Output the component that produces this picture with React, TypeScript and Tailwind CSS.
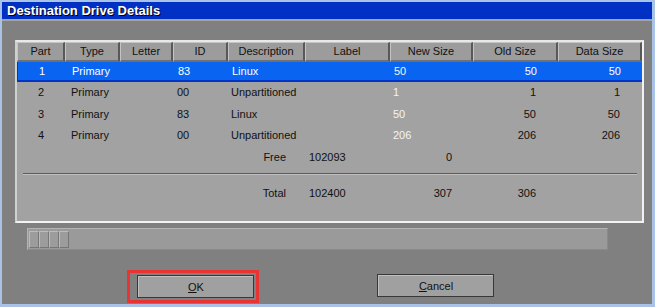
import React from "react";

const cols = "grid grid-cols-[48px_55px_53px_55px_77px_85px_83px_85px_84px]";

const headers = ["Part", "Type", "Letter", "ID", "Description", "Label", "New Size", "Old Size", "Data Size"];

const rows = [
  { part: "1", type: "Primary", id: "83", desc: "Linux", newSize: "50", oldSize: "50", dataSize: "50" },
  { part: "2", type: "Primary", id: "00", desc: "Unpartitioned", newSize: "1", oldSize: "1", dataSize: "1" },
  { part: "3", type: "Primary", id: "83", desc: "Linux", newSize: "50", oldSize: "50", dataSize: "50" },
  { part: "4", type: "Primary", id: "00", desc: "Unpartitioned", newSize: "206", oldSize: "206", dataSize: "206" },
];

function Row({ r, selected }: { r: (typeof rows)[number]; selected?: boolean }) {
  const text = selected ? "text-white" : "text-[#111]";
  return (
    <div
      className={`${cols} h-[21.5px] items-center ${text} ${
        selected ? "bg-[#0a64f2] border-y-2 border-l border-[#0034c4]" : ""
      }`}
    >
      <span className="text-center">{r.part}</span>
      <span className="pl-[6px]">{r.type}</span>
      <span />
      <span className="pl-[4px]">{r.id}</span>
      <span className="pl-[3px]">{r.desc}</span>
      <span />
      <span className="pl-[3px] text-[#f4f4f4]">{r.newSize}</span>
      <span className="pr-[22px] text-right">{r.oldSize}</span>
      <span className="pr-[22px] text-right">{r.dataSize}</span>
    </div>
  );
}

function Button({ children }: { children: React.ReactNode }) {
  return (
    <button className="w-[117px] h-[23px] border border-[#383838] bg-[#a0a0a0] text-[11px] text-[#111]">
      <span className="flex h-full w-full items-center justify-center border-t border-l border-[#c0c0c0]">
        {children}
      </span>
    </button>
  );
}

export default function App() {
  return (
    <div
      className="w-[655px] h-[307px] bg-[#a9c3e6] pt-[2px] pl-[2px] pr-[3px] pb-[3px]"
      style={{ fontFamily: '"Liberation Sans", Arial, sans-serif' }}
    >
      <div className="flex h-full flex-col bg-[#808080]">
        <div className="h-[19px] flex items-center pl-[5px] bg-[#0030c4] border-b-2 border-[#a4a4a4]">
          <span className="text-[13px] font-bold text-white leading-none [text-shadow:1px_1px_0_#000]">
            Destination Drive Details
          </span>
        </div>

        <div className="pt-[19px] pl-[13px] text-[11px]">
          {/* partition table panel */}
          <div className="w-[629px] h-[183px] border-2 border-t-[#e8e8e8] border-l-[#d0d0d0] border-r-[#f2f2f2] border-b-[#f2f2f2] bg-[#a2a2a2]">
            <div className={`${cols} h-[18px]`}>
              {headers.map((h) => (
                <div
                  key={h}
                  className="flex items-center justify-center bg-[#9c9c9c] border-t border-l border-[#c4c4c4] border-r-2 border-r-[#585858] border-b-2 border-b-[#707070] text-[#111]"
                >
                  {h}
                </div>
              ))}
            </div>
            {rows.map((r, i) => (
              <Row key={r.part} r={r} selected={i === 0} />
            ))}
            <div className={`${cols} h-[21.5px] items-center text-[#111]`}>
              <span />
              <span />
              <span />
              <span />
              <span className="pr-[19px] text-right">Free</span>
              <span className="pl-[4px]">102093</span>
              <span className="pr-[21px] text-right">0</span>
              <span />
              <span />
            </div>
            <div className="mt-[5px] ml-[6px] w-[614px] h-[2px] border-t border-[#5c5c5c] border-b border-b-[#c0c0c0]" />
            <div className={`${cols} mt-[8px] h-[21.5px] items-center text-[#111]`}>
              <span />
              <span />
              <span />
              <span />
              <span className="pr-[19px] text-right">Total</span>
              <span className="pl-[4px]">102400</span>
              <span className="pr-[21px] text-right">307</span>
              <span className="pr-[22px] text-right">306</span>
              <span />
            </div>
          </div>

          {/* progress bar */}
          <div className="mt-[5px] ml-[12px] w-[581px] h-[22px] bg-[#9a9a9a] border border-t-[#b4b4b4] border-l-[#b4b4b4] border-r-[#8a8a8a] border-b-[#8a8a8a] flex items-center pl-[1px]">
            <div className="flex h-[17px]">
              {[0, 1, 2, 3].map((k) => (
                <div
                  key={k}
                  className="w-[10px] h-full bg-[#9c9c9c] border border-t-[#bcbcbc] border-l-[#bcbcbc] border-r-[#767676] border-b-[#767676]"
                />
              ))}
            </div>
          </div>

          {/* buttons */}
          <div className="mt-[20px] ml-[112px] flex items-start">
            <div className="w-[132px] h-[33px] border-[3px] border-[#ea3434] pl-[7px] pt-[2px]">
              <Button>
                <span className="underline">O</span>K
              </Button>
            </div>
            <div className="ml-[118px] mt-[4px]">
              <Button>
                <span className="underline">C</span>ancel
              </Button>
            </div>
          </div>
        </div>
      </div>
    </div>
  );
}
